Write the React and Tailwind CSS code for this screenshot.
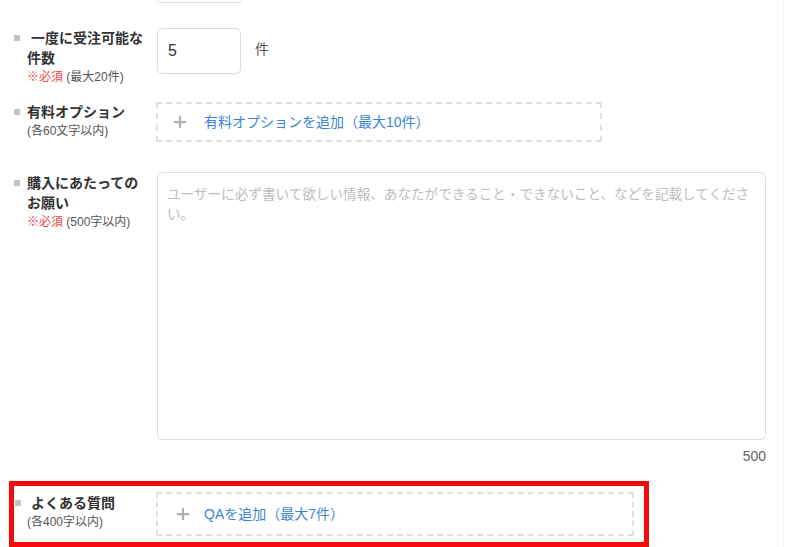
import { Plus } from "lucide-react";

function Label({ title, required, note, indent, width = "w-[156px]", bulletGap = "ml-[14px] mr-[7px]" }) {
    return (
        <div className={"flex shrink-0 items-start " + width}>
            <span className={"mt-[7px] h-[6px] w-[6px] shrink-0 bg-[#c4c4c4] " + bulletGap} />
            <div className="w-[122px]">
                <div className={"text-[14px] font-bold leading-[20px] text-[#333] " + (indent ? "indent-[4px]" : "")}>
                    {title}
                </div>
                <div className="text-[12px] leading-[19px] text-[#555]">
                    {required && <span className="text-[#e8474c]">※必須 </span>}
                    {note}
                </div>
            </div>
        </div>
    );
}

function AddBox({ width, height, text, plusGap }) {
    return (
        <div
            className={"flex items-center rounded-[2px] border-2 border-dashed border-[#e0e0e0] " + width + " " + height}
        >
            <Plus className={"h-[18px] w-[18px] text-[#b0b0b0] " + plusGap} strokeWidth={3} />
            <span className="text-[14px] leading-[20px] text-[#3b86d4]">{text}</span>
        </div>
    );
}

export default function App() {
    return (
        <div
            className="min-h-screen w-[784px] border-r border-[#f1f1f1] bg-white"
            style={{ fontFamily: '"Liberation Sans", "Noto Sans CJK JP", sans-serif' }}
        >
            {/* tail of the previous input */}
            <div className="ml-[157px] h-[3px] w-[84px] rounded-b-[5px] border border-t-0 border-[#e2e2e2]" />

            {/* 一度に受注可能な件数 */}
            <div className="mt-[25px] flex items-start">
                <Label title="一度に受注可能な件数" required note="(最大20件)" indent />
                <div className="ml-[1px] flex h-[46px] w-[84px] items-center rounded-[5px] border border-[#dcdcdc] pl-[10px] text-[16px] text-[#333]">
                    5
                </div>
                <span className="ml-[14px] mt-[11px] text-[14px] leading-[20px] text-[#555]">件</span>
            </div>

            {/* 有料オプション */}
            <div className="mt-[15px] flex items-start">
                <Label title="有料オプション" note="(各60文字以内)" />
                <AddBox
                    width="w-[446px]"
                    height="h-[40px]"
                    text="有料オプションを追加（最大10件）"
                    plusGap="ml-[13px] mr-[15px]"
                />
            </div>

            {/* 購入にあたってのお願い */}
            <div className="mt-[30px] flex items-start">
                <div className="mt-[1px]">
                    <Label title="購入にあたってのお願い" required note="(500字以内)" />
                </div>
                <div className="ml-[1px] flex w-[609px] flex-col items-end">
                    <textarea
                        readOnly
                        placeholder="ユーザーに必ず書いて欲しい情報、あなたができること・できないこと、などを記載してください。"
                        className="h-[268px] w-[609px] resize-none rounded-[5px] border border-[#dedede] px-[9px] py-[12px] text-[13.6px] leading-[20px] text-[#333] outline-none placeholder:text-[#bdbdbd]"
                    />
                    <span className="mt-[6px] text-[14px] leading-[20px] text-[#666]">500</span>
                </div>
            </div>

            {/* よくある質問 */}
            <div className="ml-[9px] mt-[15px] flex h-[66px] w-[640px] items-start border-[5px] border-[#f50a0a] pt-[6px]">
                <div className="mt-[1px]">
                    <Label
                        title="よくある質問"
                        note="(各400字以内)"
                        indent
                        width="w-[142px]"
                        bulletGap="ml-[1px] mr-[6px]"
                    />
                </div>
                <AddBox
                    width="w-[478px]"
                    height="h-[44px]"
                    text="QAを追加（最大7件）"
                    plusGap="ml-[16px] mr-[12px]"
                />
            </div>
        </div>
    );
}
